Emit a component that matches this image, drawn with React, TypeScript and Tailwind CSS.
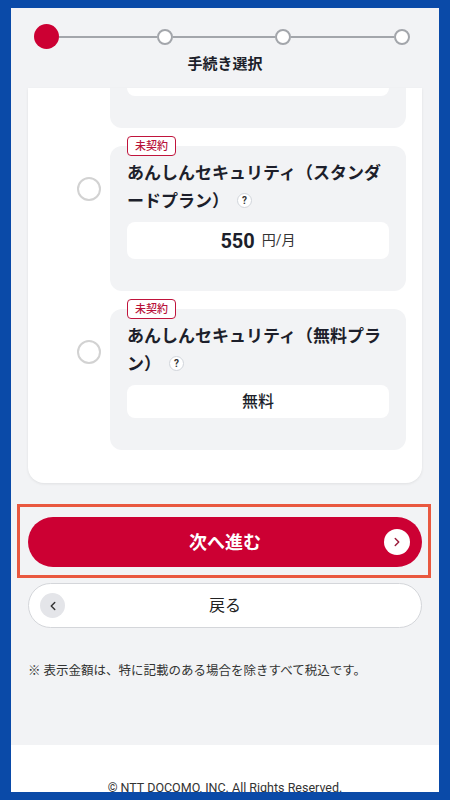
import React from "react";
import { ChevronRight, ChevronLeft } from "lucide-react";

const font = { fontFamily: "Roboto, 'Noto Sans CJK JP', sans-serif" };

function Badge() {
  return (
    <div className="absolute top-[-10px] left-[17px] h-[20px] px-[7px] border border-[#c0143c] rounded-[4px] bg-white flex items-center">
      <span className="text-[11px] leading-none font-medium text-[#b8123a]">未契約</span>
    </div>
  );
}

function Help() {
  return (
    <span className="inline-flex items-center justify-center w-[15px] h-[15px] rounded-full border border-[#d1d5db] bg-white align-middle ml-[8px] relative top-[-2px]">
      <span className="text-[10px] font-bold leading-none text-[#333]">?</span>
    </span>
  );
}

function Option({ title1, title2, price }: { title1: string; title2: string; price: React.ReactNode }) {
  return (
    <div className="flex mt-[18px]">
      <div className="ml-[49px] mt-[31px] w-[24px] h-[24px] rounded-full border-2 border-[#d2d2d2] bg-white shrink-0" />
      <div className="relative ml-[9px] w-[296px] bg-[#f2f3f5] rounded-[12px] pt-[13px] px-[17px] pb-[32px]">
        <Badge />
        <div className="text-[17px] leading-[28px] font-bold text-[#1d1f2b] w-[262px]">
          <div>{title1}</div>
          <div>
            {title2}
            <Help />
          </div>
        </div>
        {price}
      </div>
    </div>
  );
}

export default function App() {
  return (
    <div className="w-[450px] h-[800px] bg-[#0a4aa8] pt-[8px] px-[11px] overflow-hidden" style={font}>
      <div className="h-[784px] flex flex-col bg-[#f2f3f5]">
        {/* header stepper */}
        <div className="pt-[16px] pb-[14px]">
          <div className="flex items-center h-[25px] pl-[23px]">
            <div className="w-[25px] h-[25px] rounded-full bg-[#cc0033] shrink-0" />
            <div className="w-[98px] h-[2px] bg-[#a3a6ab]" />
            <div className="w-[16px] h-[16px] rounded-full border-2 border-[#a3a6ab] bg-white shrink-0" />
            <div className="w-[102px] h-[2px] bg-[#a3a6ab]" />
            <div className="w-[16px] h-[16px] rounded-full border-2 border-[#a3a6ab] bg-white shrink-0" />
            <div className="w-[103px] h-[2px] bg-[#a3a6ab]" />
            <div className="w-[16px] h-[16px] rounded-full border-2 border-[#a3a6ab] bg-white shrink-0" />
          </div>
          <div className="mt-[5px] text-center text-[15px] leading-[20px] font-bold text-[#1d1f2b]">手続き選択</div>
        </div>

        {/* card */}
        <div className="mx-[17px] bg-white rounded-b-[16px] pb-[33px] shadow-[0_1px_3px_rgba(0,0,0,0.08)]">
          <div className="ml-[82px] w-[296px] h-[40px] bg-[#f2f3f5] rounded-b-[12px] px-[17px]">
            <div className="h-[8px] bg-white rounded-b-[8px]" />
          </div>
          <Option
            title1="あんしんセキュリティ（スタンダ"
            title2="ードプラン）"
            price={
              <div className="mt-[7px] h-[37px] bg-white rounded-[8px] flex items-center justify-center">
                <span className="text-[20px] font-bold text-[#1d1f2b]">550</span>
                <span className="ml-[7px] text-[14px] text-[#333]">円/月</span>
              </div>
            }
          />
          <Option
            title1="あんしんセキュリティ（無料プラ"
            title2="ン）"
            price={
              <div className="mt-[7px] h-[33px] bg-white rounded-[8px] flex items-center justify-center">
                <span className="text-[16px] font-medium text-[#1d1f2b]">無料</span>
              </div>
            }
          />
        </div>

        {/* next button */}
        <div className="relative mx-[17px] mt-[34px]">
          <div className="h-[50px] rounded-full bg-[#cc0033] flex items-center justify-center relative">
            <span className="text-[18px] font-bold text-white">次へ進む</span>
            <div className="absolute right-[12px] top-[12px] w-[26px] h-[26px] rounded-full bg-white flex items-center justify-center">
              <ChevronRight size={14} strokeWidth={2.5} className="text-[#9c1d3c]" />
            </div>
          </div>
          <div className="absolute left-[-11px] right-[-9px] top-[-13px] bottom-[-11px] border-[3px] border-[#e9583f] pointer-events-none" />
        </div>

        {/* back button */}
        <div className="mx-[17px] mt-[16px] h-[45px] rounded-full bg-white border border-[#d4d6da] flex items-center justify-center relative">
          <div className="absolute left-[11px] top-[9px] w-[25px] h-[25px] rounded-full bg-[#e4e5e9] flex items-center justify-center">
            <ChevronLeft size={14} strokeWidth={2.5} className="text-[#333]" />
          </div>
          <span className="text-[16px] text-[#222]">戻る</span>
        </div>

        <div className="mx-[17px] mt-[34px] text-[12.5px] leading-[18px] text-[#333]">※ 表示金額は、特に記載のある場合を除きすべて税込です。</div>

        <div className="flex-1" />

        <div className="h-[47px] shrink-0 bg-white pt-[35px] text-center text-[12.5px] leading-[16px] text-[#333] overflow-hidden">
          © NTT DOCOMO, INC. All Rights Reserved.
        </div>
      </div>
    </div>
  );
}
